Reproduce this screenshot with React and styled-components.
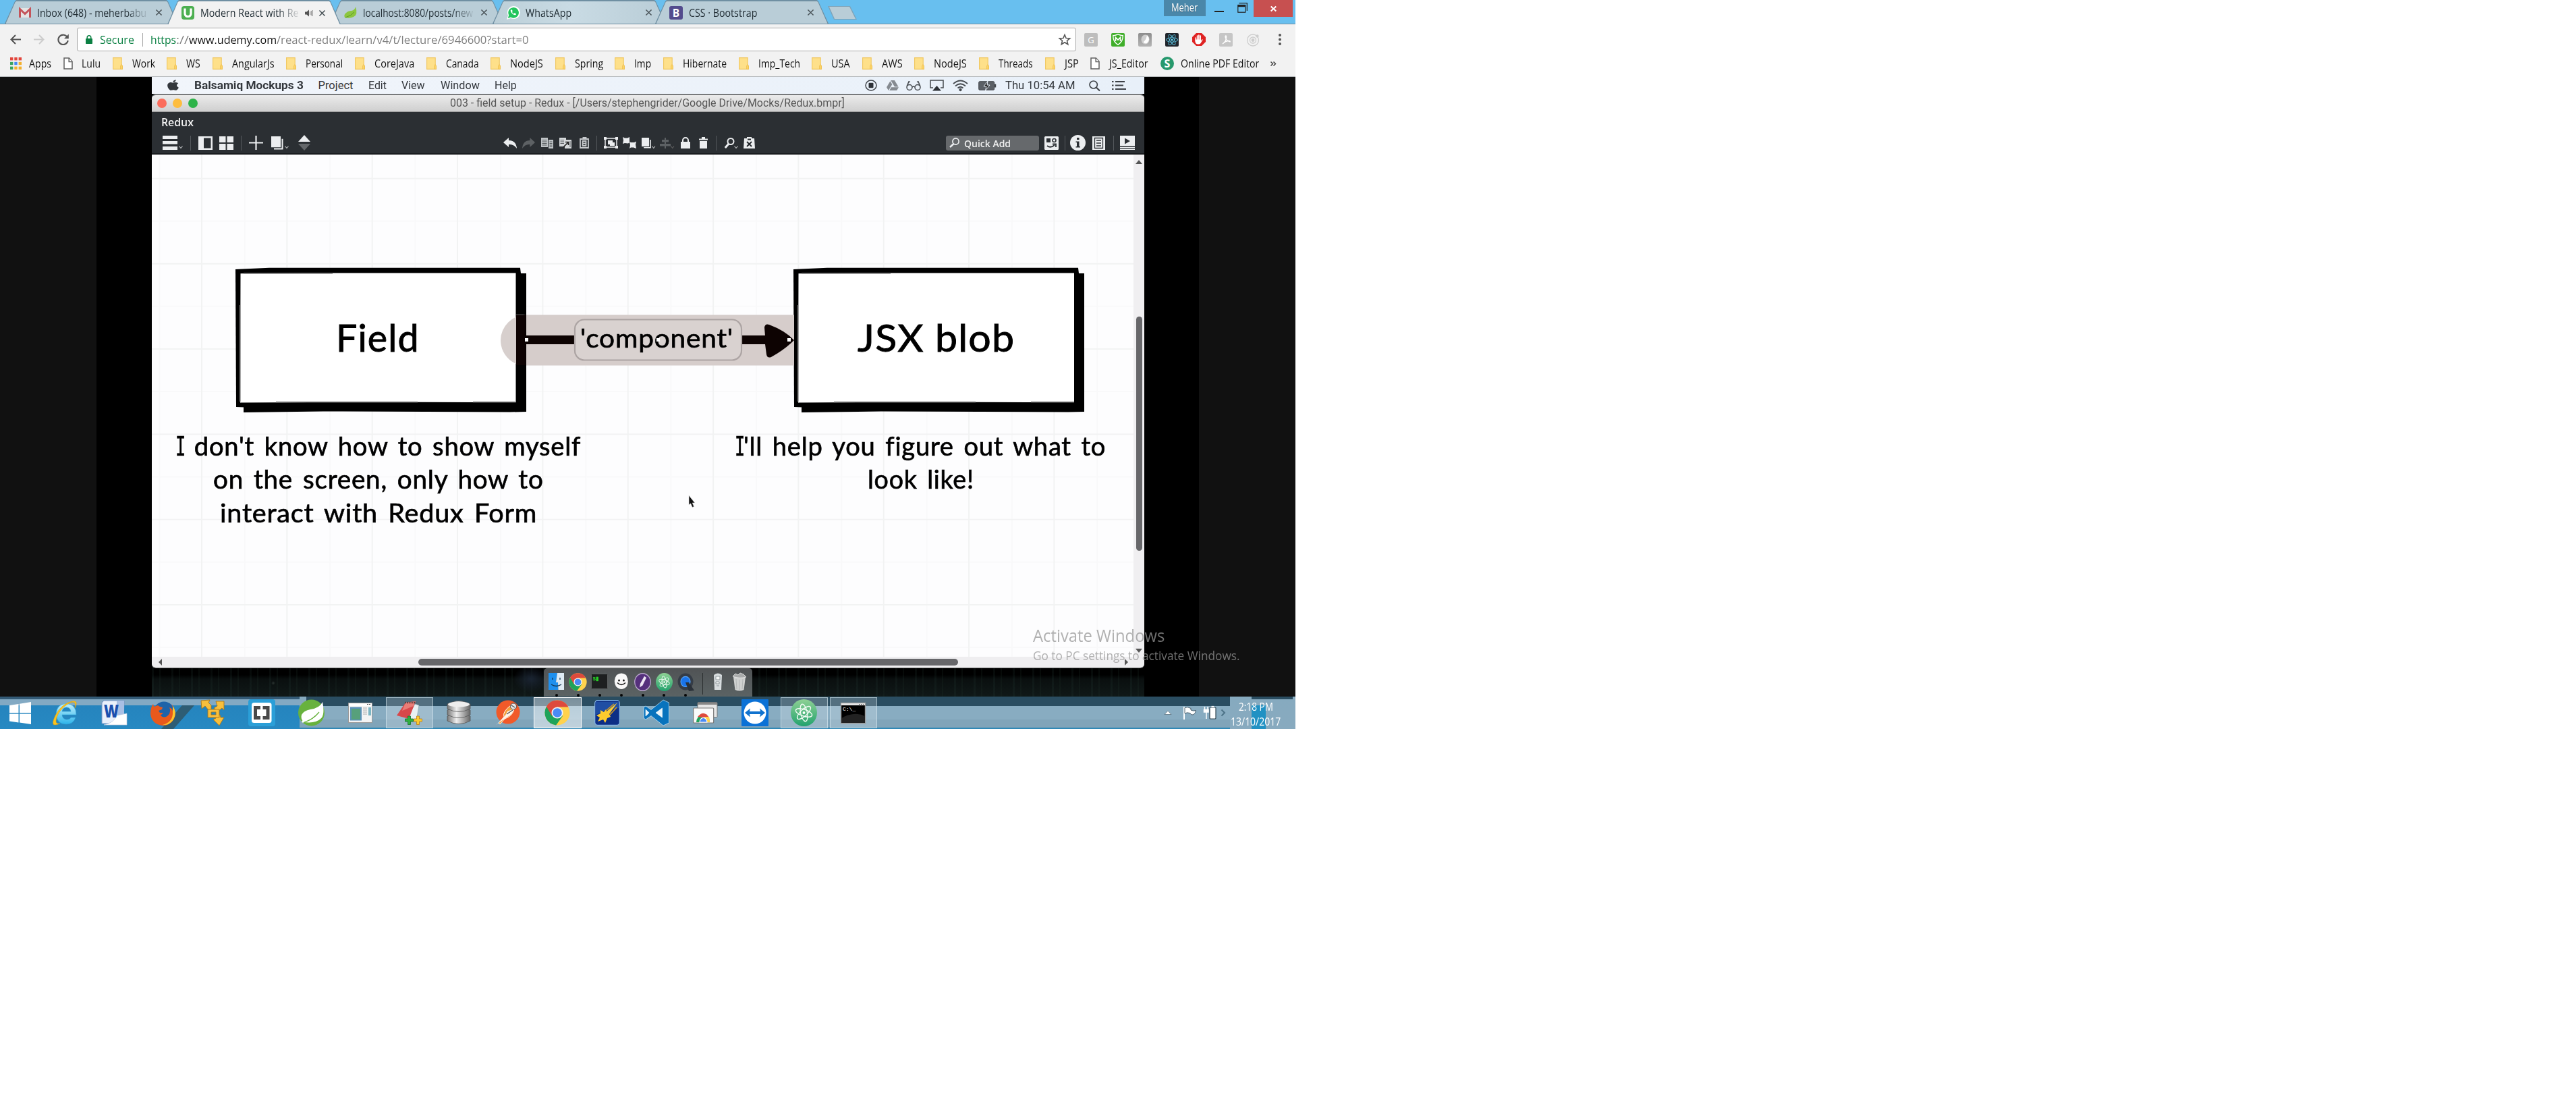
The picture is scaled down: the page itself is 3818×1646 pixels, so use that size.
import React, { useLayoutEffect, useRef, useState } from "react";
import styled, { createGlobalStyle, css } from "styled-components";
import { FaApple, FaReact, FaGoogleDrive } from "react-icons/fa";

const SEGOE = `"Open Sans", "Noto Sans", sans-serif`;
const MAC = `Roboto, Inter, sans-serif`;
const SKETCH = `Lato, "Open Sans", sans-serif`;

const GlobalStyle = createGlobalStyle`
  * { box-sizing: border-box; }
  body { margin: 0; background: #fff; overflow: hidden; }
  svg { display: block; flex: none; }
`;

/* ---------- text that is squeezed or stretched to a given width ---------- */

const FitBox = styled.span`
  display: block;
  flex: none;
  width: ${(p) => p.$w}px;
  margin-left: ${(p) => p.$gap || 0}px;
  line-height: inherit;
  white-space: pre;
  color: ${(p) => p.$color || "inherit"};
`;
const FitInner = styled.span`
  display: inline-block;
  transform-origin: 0 50%;
`;

function Fit({ w, gap, color, children }) {
  const ref = useRef(null);
  const [k, setK] = useState(1);
  useLayoutEffect(() => {
    if (ref.current) setK(w / ref.current.offsetWidth);
  }, [w]);
  return (
    <FitBox $w={w} $gap={gap} $color={color}>
      <FitInner ref={ref} style={{ transform: `scaleX(${k})` }}>
        {children}
      </FitInner>
    </FitBox>
  );
}

/* ---------- generic drawing ---------- */

const Glyph = styled.svg.attrs({ preserveAspectRatio: "none" })`
  width: ${(p) => p.$w}px;
  height: ${(p) => p.$h}px;
  margin-left: ${(p) => p.$gap || 0}px;
  margin-top: ${(p) => p.$top || 0}px;
  overflow: visible;
`;

const Desktop = styled.div`
  display: flex;
  flex-direction: column;
  width: 1920px;
  height: 1080px;
  position: relative;
  overflow: hidden;
  font-family: ${SEGOE};
  background: #111;
`;

/* ---------- tab strip ---------- */

const TabStrip = styled.div`
  display: flex;
  align-items: flex-start;
  height: 36px;
  padding-left: 7px;
  background: #68bfef;
  border-bottom: 1px solid #6f8fa2;
  flex: none;
`;
const Tab = styled.div`
  position: relative;
  z-index: ${(p) => (p.$active ? 3 : 1)};
  display: flex;
  align-items: center;
  width: 257px;
  height: ${(p) => (p.$active ? 36 : 35)}px;
  padding: 2px 0 0 21px;
  margin-right: -16px;
  flex: none;
  font-size: 15.5px;
  line-height: 20px;
  color: #222e35;
  &::before,
  &::after {
    content: "";
    position: absolute;
    z-index: -1;
    inset: 0;
    background: #6f8fa2;
    clip-path: polygon(0 100%, 15px 2px, 17px 0, 240px 0, 242px 2px, 257px 100%);
  }
  &::after {
    inset: 1.5px 1.5px 0 1.5px;
    background: ${(p) => (p.$active ? "#f2f2f2" : p.$glow ? "linear-gradient(90deg,#bccfd8,#c9dbe4 45%,#b9cdd7)" : "#b9cdd7")};
    clip-path: polygon(0 100%, 14px 2px, 16px 0, 238px 0, 240px 2px, 254px 100%);
  }
`;
const TabTitle = styled.div`
  width: ${(p) => p.$w}px;
  margin-left: 9px;
  flex: none;
  ${(p) => p.$fade && css`mask-image: linear-gradient(90deg, #000 calc(100% - 30px), rgba(0, 0, 0, 0.12));`}
`;
const NewTab = styled.div`
  width: 43px;
  height: 20px;
  margin: 9px 0 0 15px;
  background: #7ea3b8;
  clip-path: polygon(0 0, 33px 0, 43px 100%, 9px 100%);
  display: flex;
  padding: 1px;
  &::after {
    content: "";
    flex: 1;
    background: #b9cdd7;
    clip-path: polygon(1px 0, 31px 0, 40px 100%, 9px 100%);
  }
`;
const TabClose = ({ gap }) => (
  <Glyph $w={9} $h={9} $gap={gap} viewBox="0 0 10 10" stroke="#4a5459" strokeWidth="1.7">
    <path d="M0.5 0.5 9.5 9.5M9.5 0.5 0.5 9.5" />
  </Glyph>
);
const WindowControls = styled.div`
  display: flex;
  align-items: flex-start;
  margin-left: auto;
  padding-right: 4px;
`;
const UserBadge = styled.div`
  width: 62px;
  height: 24px;
  padding-left: 11px;
  background: #4a87a9;
  color: #fff;
  font-size: 15.5px;
  font-weight: 500;
  line-height: 22px;
  text-shadow: 0 1px 1px #2c5670;
`;
const CloseButton = styled.div`
  display: flex;
  align-items: center;
  justify-content: center;
  width: 58px;
  height: 25px;
  margin-left: 9px;
  background: #c75050;
`;

/* ---------- address row ---------- */

const AddressRow = styled.div`
  display: flex;
  align-items: center;
  height: 40px;
  padding-left: 15px;
  padding-top: 5px;
  background: #f2f2f2;
  flex: none;
`;
const Omnibox = styled.div`
  display: flex;
  align-items: center;
  width: 1481px;
  height: 35px;
  margin-left: 12px;
  padding: 0 7px 0 12px;
  border: 1px solid #a9a9a9;
  border-radius: 3px;
  background: #fff;
  font-size: 17px;
  line-height: 24px;
  color: #808080;
`;
const Divider = styled.i`
  width: 1px;
  height: 20px;
  margin: 0 11px 0 12px;
  background: #a5a5a5;
`;
const Extensions = styled.div`
  display: flex;
  align-items: center;
  gap: 20px;
  margin-left: 12px;
`;
const ExtTile = styled.div`
  display: flex;
  align-items: center;
  justify-content: center;
  width: 20px;
  height: 20px;
  border-radius: 2px;
  background: ${(p) => p.$bg};
  color: ${(p) => p.$color || "#fff"};
  font: 13px/20px ${SEGOE};
`;

/* ---------- bookmarks ---------- */

const Bookmarks = styled.div`
  display: flex;
  align-items: center;
  gap: 17.6px;
  height: 38px;
  padding: 0 0 1px 15px;
  background: #f2f2f2;
  border-bottom: 1px solid #b4b7ba;
  color: #111;
  font-size: 15.5px;
  line-height: 22px;
  flex: none;
`;
const Bookmark = styled.div`
  display: flex;
  align-items: center;
  gap: ${(p) => p.$gap || 14}px;
`;

const FolderIcon = () => (
  <Glyph $w={15} $h={18} viewBox="0 0 15 18">
    <path d="M.6.6h12.6v10.2l1.2 2v4.6H.6z" fill="#fee08a" stroke="#f0c65f" strokeWidth="1.1" />
    <path d="M11.6 17.2v-4.6l1.4-2 1.4 2v4.8z" fill="#fdd66c" stroke="#eebd4b" strokeWidth=".8" />
  </Glyph>
);
const FileIcon = () => (
  <Glyph $w={14} $h={18} viewBox="0 0 14 18" fill="#fff" stroke="#5f5f5f" strokeWidth="1.5">
    <path d="M1 1h7.4L13 6v11H1z" />
    <path d="M8.2 1v5.4H13" />
  </Glyph>
);
const AppsIcon = () => (
  <Glyph $w={17} $h={18} viewBox="0 0 17 18">
    {["#e2453c", "#e2453c", "#e2453c", "#3aa35f", "#4688f1", "#f3b02c", "#3aa35f", "#f3b02c", "#f3b02c"].map((c, i) => (
      <rect key={i} x={(i % 3) * 6.3} y={Math.floor(i / 3) * 6.8} width="4.4" height="4.4" fill={c} />
    ))}
  </Glyph>
);
const PdfIcon = () => (
  <Glyph $w={20} $h={20} viewBox="0 0 20 20">
    <circle cx="10" cy="10" r="10" fill="#27996d" />
    <text x="10" y="15.6" textAnchor="middle" fontSize="16" fontWeight="700" fill="#fff" fontFamily="Open Sans">S</text>
  </Glyph>
);

const folders = [
  ["Work", 34], ["WS", 21], ["AngularJs", 63], ["Personal", 55], ["CoreJava", 59], ["Canada", 49],
  ["NodeJS", 49], ["Spring", 42], ["Imp", 25], ["Hibernate", 65], ["Imp_Tech", 62], ["USA", 28],
  ["AWS", 31], ["NodeJS", 49], ["Threads", 51], ["JSP", 21],
];

/* ---------- lecture video ---------- */

const PlayerArea = styled.div`
  display: flex;
  justify-content: center;
  height: 918px;
  flex: none;
  padding: 0 143px;
  background: #111;
`;
const Letterbox = styled.div`
  display: flex;
  width: 1634px;
  padding: 0 81px 0 82px;
  background: #000;
`;
const MacScreen = styled.div`
  display: flex;
  flex-direction: column;
  width: 1471px;
  font-family: ${MAC};
  background:
    radial-gradient(3px 3px at 180px 898px, #2b3432, transparent),
    radial-gradient(26px 20px at 562px 892px, #1a2432, transparent),
    repeating-linear-gradient(90deg, rgba(40, 66, 60, 0.16) 0 3px, transparent 3px 11px, rgba(30, 48, 40, 0.22) 11px 13px, transparent 13px 29px),
    linear-gradient(#000 886px, #0a0f0f 892px, #101918);
`;
const MenuBar = styled.div`
  display: flex;
  align-items: center;
  height: 25px;
  padding-right: 27px;
  background: linear-gradient(90deg, #f1f5fb, #e8f0f9);
  color: #33373c;
  font-size: 16.5px;
  line-height: 24px;
  flex: none;
`;
const Bold = styled.b`
  font-weight: 700;
`;
const Push = styled.div`
  flex: 1;
`;
const MacWindow = styled.div`
  display: flex;
  flex-direction: column;
  height: 851px;
  border-radius: 6px;
  overflow: hidden;
  border-top: 2px solid #77797b;
  border-bottom: 1px solid #888;
  background: #2b2f33;
  flex: none;
`;
const TitleBar = styled.div`
  display: flex;
  align-items: center;
  height: 25px;
  padding-left: 8px;
  background: linear-gradient(#ebebeb, #cfcfcf);
  border-bottom: 1px solid #999;
  color: #555;
  font-size: 16px;
  line-height: 24px;
  flex: none;
`;
const Light = styled.i`
  width: 14px;
  height: 14px;
  margin: 0 9px 0 0;
  border-radius: 50%;
  background: ${(p) => p.$c};
`;
const ProjectName = styled.div`
  display: flex;
  height: 28px;
  padding: 1px 0 0 14px;
  color: #f2f2f2;
  font: 600 16.5px/27px ${SEGOE};
  flex: none;
`;
const ToolRow = styled.div`
  display: flex;
  align-items: center;
  height: 35px;
  padding: 2px 14px 0 0;
  border-bottom: 2px solid #191b1e;
  flex: none;
`;
const Sep = styled.i`
  width: 1px;
  height: 22px;
  margin-left: ${(p) => p.$gap}px;
  background: #54585c;
`;
const QuickAdd = styled.div`
  display: flex;
  align-items: center;
  width: 138px;
  height: 22px;
  padding-left: 5px;
  border-radius: 3px;
  background: #66696c;
  color: #f1f1f1;
  font: 600 15px/22px ${SEGOE};
`;
const Chevron = ({ gap, dim, w = 6 }) => (
  <Glyph $w={w} $h={4} $gap={gap} $top={13} viewBox="0 0 6 4" fill="none" stroke={dim ? "#666" : "#c8cacc"} strokeWidth="1.1">
    <path d="M.5.5 3 3.5 5.5.5" />
  </Glyph>
);

/* ---------- mockup canvas ---------- */

const Workspace = styled.div`
  display: flex;
  flex: 1;
  min-height: 0;
`;
const Canvas = styled.div`
  position: relative;
  width: 1455px;
  font-family: ${SKETCH};
  color: #000;
  background-color: #fdfdfe;
  background-image:
    linear-gradient(90deg, #f2f3f3 2px, transparent 2px),
    linear-gradient(#f2f3f3 2px, transparent 2px),
    linear-gradient(90deg, #f9f9fa 2px, transparent 2px),
    linear-gradient(#f9f9fa 2px, transparent 2px);
  background-size: 126.35px 100%, 100% 126.3px, 126.35px 100%, 100% 126.3px;
  background-position: 73px 0, 0 34.5px, 10.5px 0, 0 97.5px;
`;
const VScroll = styled.div`
  display: flex;
  flex-direction: column;
  align-items: center;
  width: 16px;
  padding: 8px 0 6px;
  background: #f0eff1;
`;
const VThumb = styled.i`
  width: 9px;
  height: 347px;
  margin-top: 226px;
  border-radius: 5px;
  background: #67676a;
`;
const HScroll = styled.div`
  display: flex;
  align-items: center;
  height: 16px;
  padding: 0 24px 0 10px;
  background: #efeef0;
  flex: none;
`;
const HThumb = styled.i`
  width: 800px;
  height: 10px;
  margin-left: 380px;
  border-radius: 5px;
  background: #67676a;
`;
const Arrow = styled.i`
  border: 5px solid transparent;
  ${(p) => p.$dir === "up" && "border-bottom: 6px solid #555; border-top: 0;"}
  ${(p) => p.$dir === "down" && "border-top: 6px solid #555; border-bottom: 0; margin-top: auto;"}
  ${(p) => p.$dir === "left" && "border-right: 5px solid #555; border-left: 0;"}
  ${(p) => p.$dir === "right" && "border-left: 5px solid #555; border-right: 0; margin-left: auto;"}
`;
const Diagram = styled.svg`
  position: absolute;
  inset: 0;
`;
const Label = styled.div`
  position: absolute;
  left: ${(p) => p.$x}px;
  top: ${(p) => p.$y}px;
  font-size: ${(p) => p.$size}px;
  line-height: ${(p) => p.$lh || p.$size}px;
  letter-spacing: 0.02em;
  -webkit-text-stroke: ${(p) => p.$stroke || 0.7}px #000;
  white-space: nowrap;
`;
const Note = styled(Label)`
  display: flex;
  flex-direction: column;
  align-items: center;
  word-spacing: 0.11em;
`;
const Slab = styled.span`
  display: inline-block;
  margin: 0 -0.16em 0 -0.14em;
  font-family: "DejaVu Sans Mono", monospace;
  font-size: 0.98em;
  line-height: 1;
  transform: scaleX(0.68);
`;

/* a hand-drawn box with a heavy offset shadow; x, y is the outer corner */
const Box = ({ x, y, w, right }) => (
  <g transform={`translate(${x} ${y})`}>
    <path d={`M12 8H${w + 9}V213L${w - 15} 213.5 130 212.5 12 214z`} />
    <path d={`M0 2 50 -.3H${w}L${w + 1} 8V206L30 207 1 206z`} />
    <path d={`M7.500 8.300 100 7.500H${w - right}V199L${w - 60} 199 200 198.500 7 199.500z`} fill="#fff" />
    <path d="M7 55V198" stroke="#9a9a9a" strokeWidth="1.6" />
    <path d={`M60 198.400H270M${w - 70} 198.400H${w - right}`} stroke="#aaa" strokeWidth="1.6" />
    <path d="M12 8H144" stroke="#777" strokeWidth="1.4" />
  </g>
);

function MockCanvas() {
  return (
    <Canvas>
      <Diagram width="1455" height="744">
        <Box x={124} y={168} w={422} right={6.5} />
        <Box x={951} y={168} w={422} right={6} />
        <path d="M555 237.5a38 38 0 0 0-38 37.5 38 38 0 0 0 23 35V237.5z" fill="#d4cbc9" opacity=".92" />
        <path d="M555 237.5H952V312.5H555z" fill="#d6cdcb" />
        <path d="M555 268H627V281H555zM874 268H918V281H874z" fill="#0d0302" />
        <path d="M908 256q1-6 7-4 24 9 37 23-14 14-34 25-6 2-7-4l-2-15q-1-6 0-12z" fill="#0d0302" />
        <rect x="627" y="244.5" width="247" height="60" rx="14" fill="#d9d2d0" stroke="#aca4a3" strokeWidth="2.2" />
        <rect x="540" y="238" width="14.5" height="74" fill="#0d0202" />
        <rect x="553" y="272" width="5" height="5" fill="#fff" />
        <rect x="942" y="272" width="5" height="5" fill="#fff" />
      </Diagram>
      <Label $x={273} $y={243} $size={55.5} $stroke={0.9}><Fit w={124}>Field</Fit></Label>
      <Label $x={1046} $y={243} $size={55.5} $stroke={0.9}><Fit w={233}>JSX blob</Fit></Label>
      <Label $x={635} $y={252} $size={39}><Fit w={227}>'component'</Fit></Label>
      <Note $x={36} $y={405.5} $size={39.5} $lh={49.7}>
        <Fit w={600}><Slab>I</Slab> don't know how to show myself</Fit>
        <Fit w={490}>on the screen, only how to</Fit>
        <Fit w={470}>interact with Redux Form</Fit>
      </Note>
      <Note $x={865} $y={405.5} $size={39.5} $lh={49.7}>
        <Fit w={549}><Slab>I</Slab>'ll help you figure out what to</Fit>
        <Fit w={158}>look like!</Fit>
      </Note>
      <Diagram width="1455" height="744">
        <rect x="748" y="272" width="5" height="5" fill="#fff" />
        <path d="M796 505v14l2.600-2 2.600 5.500 2.400-1-2.400-5.500h3.600z" fill="#111" stroke="#ddd" strokeWidth=".6" />
      </Diagram>
    </Canvas>
  );
}

/* ---------- mac dock ---------- */

const DockTray = styled.div`
  display: flex;
  justify-content: center;
  flex: 1;
`;
const Dock = styled.div`
  display: flex;
  align-items: flex-start;
  width: 309px;
  padding: 6.500px 0 0 6px;
  margin-left: -1px;
  border-radius: 5px 5px 0 0;
  background: linear-gradient(#505355, #5b6364);
`;
const DockItem = styled.div`
  display: flex;
  flex-direction: column;
  align-items: center;
  justify-content: space-between;
  width: 27px;
  height: 35px;
  margin-right: 5.300px;
  &::after {
    content: "";
    width: 4px;
    height: 4px;
    border-radius: 50%;
    background: ${(p) => (p.$idle ? "transparent" : "#050505")};
  }
`;
const DockSep = styled.i`
  width: 1px;
  height: 32px;
  margin: 0 9px 0 6px;
  background: #2c3031;
`;

const Chrome = ({ w, h }) => (
  <Glyph $w={w} $h={h} viewBox="0 0 40 40">
    <circle cx="20" cy="20" r="19.500" fill="#ffd24d" />
    <path d="M20 20 3.100 10.200A19.500 19.500 0 0 0 18 39.400L28.400 25z" fill="#1fa35a" />
    <path d="M3.100 10.200A19.500 19.500 0 0 1 37.300 11H20L11.500 24.800z" fill="#de4a3c" />
    <circle cx="20" cy="20" r="9" fill="#f4f4f4" />
    <circle cx="20" cy="20" r="7.200" fill="#4a8af4" />
  </Glyph>
);
const AtomMark = ({ w, h }) => (
  <Glyph $w={w} $h={h} viewBox="0 0 40 40">
    <defs>
      <linearGradient id="atomFill" x1="0" y1="0" x2="0" y2="1">
        <stop offset="0" stopColor="#8ed194" />
        <stop offset="1" stopColor="#23a26e" />
      </linearGradient>
    </defs>
    <circle cx="20" cy="20" r="20" fill="url(#atomFill)" />
    <g fill="none" stroke="#f2fbf4" strokeWidth="1.400">
      <ellipse cx="20" cy="20" rx="5" ry="13" transform="rotate(-12 20 20)" />
      <ellipse cx="20" cy="20" rx="5" ry="13" transform="rotate(48 20 20)" />
      <ellipse cx="20" cy="20" rx="5" ry="13" transform="rotate(108 20 20)" />
    </g>
    <circle cx="20" cy="20" r="2" fill="#fff" />
  </Glyph>
);

function MacDock() {
  return (
    <DockTray>
      <Dock>
        <DockItem>
          <Glyph $w={25} $h={25} viewBox="0 0 25 25">
            <path d="M1 0H14L12 14H15L15.500 25H1z" fill="#1f90ee" />
            <path d="M14 0H24V25H15.500L15 14H12z" fill="#dfeaf3" />
            <path d="M7 7v3M18 7v3M5 17q7.500 5 15 0" stroke="#14344f" fill="none" strokeWidth="1.300" />
          </Glyph>
        </DockItem>
        <DockItem><Chrome w={27} h={27} /></DockItem>
        <DockItem>
          <Glyph $w={25} $h={25} viewBox="0 0 25 25">
            <rect x=".5" y="1.500" width="24" height="22" rx="1" fill="#1d1f20" stroke="#5c5f60" />
            <text x="2.500" y="11" fontSize="7.500" fontWeight="700" fontFamily="Liberation Mono" fill="#26d326">$▮</text>
          </Glyph>
        </DockItem>
        <DockItem>
          <Glyph $w={22} $h={25} viewBox="0 0 22 25">
            <path d="M4 3q7-5 14 0 5 9 1 17-8 8-16 0-5-9 1-17z" fill="#f8f8f8" />
            <ellipse cx="7.500" cy="11" rx="1.300" ry="1.500" /><ellipse cx="14.500" cy="11" rx="1.300" ry="1.500" />
            <path d="M5 14.500q6 6 12 0" fill="none" stroke="#111" strokeWidth="1.500" />
          </Glyph>
        </DockItem>
        <DockItem>
          <Glyph $w={25} $h={27} viewBox="0 0 25 25">
            <circle cx="12.500" cy="12.500" r="11.800" fill="#55307c" stroke="#b9a6cc" strokeWidth="1.300" />
            <path d="M15 4.500 18 6.500 12.500 17 8 20 9 14.500z" fill="#eee7f4" />
          </Glyph>
        </DockItem>
        <DockItem><AtomMark w={25} h={27} /></DockItem>
        <DockItem>
          <Glyph $w={25} $h={27} viewBox="0 0 25 25">
            <circle cx="12" cy="12" r="11.500" fill="#353c46" />
            <circle cx="12" cy="12" r="7" fill="#1a74ea" stroke="#59a9ff" strokeWidth="1" />
            <path d="M12 13 17 13 25 24 17 25z" fill="#2a3038" />
          </Glyph>
        </DockItem>
        <DockSep />
        <DockItem $idle>
          <Glyph $w={14} $h={26} viewBox="0 0 14 26">
            <path d="M1 3q6-5 12 0L12 25H2z" fill="#d8dddf" />
            <path d="M4 5h6v5H4zM4 13h5v3H4zM5 19h4" stroke="#8e979b" fill="#f6f8f8" />
          </Glyph>
        </DockItem>
        <DockItem $idle>
          <Glyph $w={22} $h={27} viewBox="0 0 22 27">
            <path d="M2 6H20L17.500 25Q11 28 4.500 25z" fill="#cfd1d0" />
            <path d="M1 5 5 1 9 3 12 0 17 2 21 6Q11 9 1 5z" fill="#a9abab" stroke="#eee" strokeWidth=".8" />
            <path d="M6 9 7 24M11 10V25M16 9 15 24" stroke="#b5b8b7" />
          </Glyph>
        </DockItem>
      </Dock>
    </DockTray>
  );
}

/* ---------- mac toolbar ---------- */

const Stack = ({ gap, w, h }) => (
  <Glyph $gap={gap} $w={w} $h={h} viewBox="0 0 19 21">
    <path d="M0 0H14V17H0z" fill="#eceef0" />
    <path d="M16.500 4V19.500H4" fill="none" stroke="#eceef0" strokeWidth="2" />
  </Glyph>
);

function BalsamiqTools() {
  const c = "#eceef0";
  return (
    <ToolRow>
      <Glyph $gap={15.5} $w={22} $h={21} viewBox="0 0 22 21" fill={c}><path d="M0 0H22V5H0zM0 8H22V12.500H0zM0 16H22V21H0z" /></Glyph>
      <Chevron gap={2} />
      <Sep $gap={11} />
      <Glyph $gap={11} $w={21} $h={20} viewBox="0 0 21 20" fill={c}><path fillRule="evenodd" d="M0 0H21V20H0zM8 2.500V17.500H18.500V2.500z" /></Glyph>
      <Glyph $gap={10} $w={21} $h={20} viewBox="0 0 21 20" fill={c}><path d="M0 0H9.500V9H0zM11.500 0H21V9H11.500zM0 11H9.500V20H0zM11.500 11H21V20H11.500z" /></Glyph>
      <Sep $gap={11.5} />
      <Glyph $gap={10.5} $w={21} $h={21} viewBox="0 0 21 21" stroke={c} strokeWidth="2.200"><path d="M0 10.500H21M10.500 0V21" /></Glyph>
      <Stack gap={12} w={19} h={20} />
      <Chevron gap={1.5} />
      <Glyph $gap={13.5} $w={18} $h={23} viewBox="0 0 18 23"><path d="M9 0 18 10H0z" fill={c} /><path d="M9 23 18 13H0z" fill="#64676a" /></Glyph>

      <Glyph $gap={286} $w={20} $h={16} viewBox="0 0 20 16"><path d="M8 0V4Q19 4 20 16 15 9 8 10V14L0 7z" fill={c} /></Glyph>
      <Glyph $gap={8} $w={19} $h={16} viewBox="0 0 20 16"><path d="M12 0V4Q1 4 0 16 5 9 12 10V14L20 7z" fill="#5d6164" /></Glyph>
      <Glyph $gap={9} $w={18} $h={16} viewBox="0 0 18 16">
        <path d="M0 0H10V14H0zM11 3H18V16H11z" fill="#bfc3c6" />
        <path d="M1.500 3.500H8.500M1.500 6H8.500M1.500 8.500H8.500M1.500 11H8.500M12.500 6H16.500M12.500 8.500H16.500M12.500 11H16.500M12.500 13.500H16.500" stroke="#3b3f43" strokeWidth=".8" />
      </Glyph>
      <Glyph $gap={9.5} $w={18} $h={16} viewBox="0 0 18 16">
        <path d="M0 0H10V13H0zM8 3H18V16H8z" fill="#d5d8da" />
        <path d="M1.500 3.500H7M1.500 6H7M1.500 8.500H7M16 5V14" stroke="#3b3f43" strokeWidth=".8" />
        <path d="M6 14 13 7M9 6.500H13.500V11" stroke="#222" fill="none" strokeWidth="1.600" />
      </Glyph>
      <Glyph $gap={11.5} $w={14} $h={17} viewBox="0 0 14 17" fill="none" stroke="#c6c9cc" strokeWidth="1.800">
        <path d="M1 3H13V16H1zM4.500 1H9.500V3M4.500 6H9.500V13H4.500zM4.500 9.500H9" />
      </Glyph>
      <Sep $gap={11.5} />
      <Glyph $gap={10} $w={21} $h={17} viewBox="0 0 21 17">
        <path d="M2 2H19V15H2z" fill="none" stroke={c} strokeWidth="1.500" />
        <path d="M0 0H4V4H0zM17 0H21V4H17zM0 13H4V17H0zM17 13H21V17H17zM6 5H13V11H6zM11 8H16V13H9V11H11z" fill={c} />
      </Glyph>
      <Glyph $gap={7} $w={20} $h={17} viewBox="0 0 20 17" fill={c}>
        <path d="M0 0 3 1.500H7L10 0V8L8 9.500 3 9 0 10 1 5zM10 7 12 8H17L20 6.500 19 11 20 17 16 15.500H12L10 17 11 12z" />
      </Glyph>
      <Stack gap={7.5} w={15} h={16} />
      <Chevron gap={0} w={5.5} />
      <Glyph $gap={7} $w={16} $h={16} viewBox="0 0 16 16" fill="#5d6164"><path d="M7 0H9V16H7zM3 3H13V6.500H3zM0 9H16V12.500H0z" /></Glyph>
      <Chevron gap={0} w={5.5} dim />
      <Glyph $gap={9} $w={14} $h={17} viewBox="0 0 14 17"><path d="M0 7H14V17H0z" fill={c} /><path d="M3 8V5a4 4 0 0 1 8 0V8" fill="none" stroke={c} strokeWidth="2" /></Glyph>
      <Glyph $gap={13.5} $w={13} $h={17} viewBox="0 0 13 17" fill={c}><path d="M0 2.500H4V0H9V2.500H13V4.500H0zM1 6H12V17H1z" /></Glyph>
      <Sep $gap={12} />
      <Glyph $gap={12} $w={15} $h={16} viewBox="0 0 15 16" fill="none" stroke={c} strokeWidth="2"><circle cx="9" cy="5.500" r="4.500" /><path d="M6 9 .8 15" strokeWidth="3" /></Glyph>
      <Chevron gap={-1} />
      <Glyph $gap={8} $w={17} $h={17} viewBox="0 0 17 17"><path d="M1 2H5V0H12V2H16L17 17H0z" fill={c} /><path d="M6 3.500H11M5 7 12 14M12 7 5 14" stroke="#22262a" strokeWidth="1.900" /></Glyph>

      <Push />
      <QuickAdd>
        <Glyph $w={15} $h={15} viewBox="0 0 15 15" fill="none" stroke={c} strokeWidth="1.700"><circle cx="9.500" cy="5.500" r="4.600" /><path d="M6.500 9 1 14" strokeWidth="2.500" /></Glyph>
        <Fit w={69} gap={7.5}>Quick Add</Fit>
      </QuickAdd>
      <Glyph $gap={8.5} $w={21} $h={20} viewBox="0 0 21 20">
        <rect width="21" height="20" rx="1.500" fill={c} />
        <path d="M3 3H9V9H3z" fill="#2b2f33" /><circle cx="14.500" cy="6" r="2.500" fill="none" stroke="#2b2f33" strokeWidth="1.600" />
        <path d="M4 14Q9 18 15 13M12 11.500H17V16" fill="none" stroke="#2b2f33" strokeWidth="1.800" />
      </Glyph>
      <Sep $gap={9} />
      <Glyph $gap={7} $w={23} $h={23} viewBox="0 0 23 23"><circle cx="11.500" cy="11.500" r="11.500" fill={c} /><path d="M10 4H13.500V7H10zM8.500 9.500H13.500V17H15V18.500H8.500V17H10V11H8.500z" fill="#2b2f33" /></Glyph>
      <Glyph $gap={10} $w={19} $h={20} viewBox="0 0 19 20"><rect width="19" height="20" fill={c} /><path d="M3.500 2.500H15.500V17.500H3.500zM6 6H13M6 10H13M6 14H13" fill="none" stroke="#2b2f33" strokeWidth="1.300" /></Glyph>
      <Sep $gap={12} />
      <Glyph $gap={9} $w={22} $h={21} viewBox="0 0 22 21"><path d="M0 0H22V15.500H0zM0 17H22V18.200H0zM0 19.500H22V21H0z" fill={c} /><path d="M7 3.500 15 8 7 12.500z" fill="#2b2f33" /></Glyph>
    </ToolRow>
  );
}

function MacMenu() {
  return (
    <MenuBar>
      <Glyph as={FaApple} $gap={23} $w={17} $h={18} $top={-2} color="#33373c" />
      <Fit w={162} gap={22.5}><Bold>Balsamiq Mockups 3</Bold></Fit>
      <Fit w={52} gap={22}>Project</Fit>
      <Fit w={27} gap={22}>Edit</Fit>
      <Fit w={35} gap={22.5}>View</Fit>
      <Fit w={58} gap={22.5}>Window</Fit>
      <Fit w={33} gap={22}>Help</Fit>
      <Push />
      <Glyph $w={18} $h={17} viewBox="0 0 18 18"><circle cx="9" cy="9" r="8" fill="none" stroke="#3d4146" strokeWidth="1.500" /><rect x="5.500" y="5" width="7" height="8" rx="1" fill="#2d3136" /></Glyph>
      <Glyph as={FaGoogleDrive} $gap={14} $w={18} $h={17} color="#858a90" />
      <Glyph $gap={11.5} $w={22} $h={14} viewBox="0 0 22 14" fill="none" stroke="#45494e" strokeWidth="1.500"><circle cx="5" cy="9.500" r="4" /><circle cx="17" cy="9.500" r="4" /><path d="M9 9Q11 7 13 9M1 8 4 1 6 1.500M21 8 18 1 16 1.500" /></Glyph>
      <Glyph $gap={13} $w={21} $h={17} viewBox="0 0 21 17"><path d="M5 12H1V1H20V12H16" fill="none" stroke="#45494e" strokeWidth="1.500" /><path d="M10.500 9 17 16.500H4z" fill="#2d3136" /></Glyph>
      <Glyph $gap={13} $w={23} $h={16} viewBox="0 0 23 16" fill="none" stroke="#45494e" strokeWidth="1.700"><path d="M1 5Q11.500-4 22 5M4 8.500Q11.500 2 19 8.500M7.500 11.500Q11.500 8 15.500 11.500" /><circle cx="11.500" cy="14" r="1.300" fill="#45494e" /></Glyph>
      <Glyph $gap={15} $w={27} $h={14} viewBox="0 0 27 14"><rect x=".7" y=".7" width="23" height="12.600" rx="1.500" fill="#5b6066" stroke="#45494e" /><path d="M25 4.500V9.500" stroke="#45494e" strokeWidth="2.500" /><path d="M14 0 8 8H12L10.500 14 17 6H13z" fill="#222" stroke="#e8f0f9" /></Glyph>
      <Fit w={103} gap={13}>Thu 10:54 AM</Fit>
      <Glyph $gap={20.5} $w={16.5} $h={16} viewBox="0 0 16 16" fill="none" stroke="#3d4146" strokeWidth="1.600"><circle cx="6.500" cy="6.500" r="5.500" /><path d="M10.500 10.500 15.500 15.500" strokeWidth="2" /></Glyph>
      <Glyph $gap={18} $w={21} $h={13} viewBox="0 0 21 13" stroke="#3d4146" strokeWidth="2"><path d="M0 1H2.500M5 1H19M0 6.500H2.500M5 6.500H17M0 12H2.500M5 12H21" /></Glyph>
    </MenuBar>
  );
}

/* ---------- windows taskbar ---------- */

const TaskBar = styled.div`
  position: relative;
  display: flex;
  align-items: center;
  height: 48px;
  flex: none;
  background:
    linear-gradient(#2a4d61 4px, transparent 4px) 1855px 0 / 61px 48px no-repeat,
    linear-gradient(transparent 13px, #2191c3 13px) 1855px 0 / 21px 48px no-repeat,
    linear-gradient(#86aabf, #88aabf) 1823px 0 / 97px 100% no-repeat,
    linear-gradient(#335a76 4px, #82a9c3 4px 13px, #2584be 13px, #2789c2) 0 0 / 444px 100% no-repeat,
    linear-gradient(#86aabf, #86aabf) 444px 0 / 10px 14px no-repeat,
    linear-gradient(#2a4d61 14px, #88acc1 14px 34px, #80a4b9 34px 46px, #3088b5 46px);
`;
const Streak = styled.i`
  position: absolute;
  left: 239px;
  top: 13px;
  width: 49px;
  height: 35px;
  background: #2e5d74;
  clip-path: polygon(63% 0, 100% 0, 37% 100%, 0 100%);
`;
const TaskCell = styled.div`
  position: relative;
  display: flex;
  align-items: center;
  justify-content: center;
  width: ${(p) => p.$w || 73.05}px;
  height: 46px;
  flex: none;
  &::before {
    content: ${(p) => (p.$state ? '""' : "none")};
    position: absolute;
    z-index: 0;
    inset: 0 1.500px;
    border: 1px solid ${(p) => (p.$state === "active" ? "#fff" : "rgba(220,236,245,.6)")};
    background: ${(p) => (p.$state === "active" ? "linear-gradient(rgba(255,255,255,.38), rgba(255,255,255,.5))" : "rgba(255,255,255,.2)")};
  }
  > svg {
    position: relative;
  }
`;
const Tray = styled.div`
  display: flex;
  align-items: center;
  margin-left: auto;
  height: 48px;
  padding-right: 22px;
`;
const Clock = styled.div`
  display: flex;
  flex-direction: column;
  align-items: center;
  width: 74px;
  margin-left: 8px;
  padding-top: 3px;
  color: #fff;
  font-size: 15.5px;
  font-weight: 500;
  line-height: 22px;
`;

function Taskbar() {
  return (
    <TaskBar>
      <Streak />
      <TaskCell $w={59.5}>
        <Glyph $w={32} $h={33} viewBox="0 0 32 33" fill="#fff"><path d="M0 5 13.500 3V16H0zM15 2.700 32 0V16H15zM0 17.500H13.500V30.500L0 28.500zM15 17.500H32V33L15 30.500z" /></Glyph>
      </TaskCell>
      <TaskCell>
        <Glyph $w={38} $h={38} viewBox="0 0 38 38">
          <defs><linearGradient id="ieFill" x1="0" y1="0" x2="0" y2="1"><stop offset="0" stopColor="#bdeffd" /><stop offset="1" stopColor="#2fb4ea" /></linearGradient></defs>
          <path fillRule="evenodd" d="M36 22H15q1 7 7 7 5 0 6-3h7q-3 10-14 10Q7 36 6 21 7 6 21 5.500 36 6 36 22zM15 17H28q-1-6-6.500-6T15 17z" fill="url(#ieFill)" stroke="#2a9dd4" strokeWidth=".6" />
          <path d="M34 12Q40 0 30 2 15 5 5 23-2 38 5 37 9 36.500 12 34.500 6 36.500 6 31 7 20 18 10 29 1 33.500 4 35.500 6 34 12z" fill="#fbc31e" stroke="#d99a0a" strokeWidth=".5" />
        </Glyph>
      </TaskCell>
      <TaskCell>
        <Glyph $w={37} $h={36} viewBox="0 0 37 36">
          <path d="M3 0H33L32 34H0V3z" fill="#e9f0fb" stroke="#7593c4" />
          <path d="M22 0H33V34H22z" fill="#a9bfe4" />
          <path d="M22 22 37 19V36H3Q18 33 22 22z" fill="#fff" stroke="#b9c6dd" strokeWidth=".7" />
          <text x="14" y="25" textAnchor="middle" fontSize="27" fontWeight="800" fontFamily="Open Sans" textLength="22" lengthAdjust="spacingAndGlyphs" fill="#1a4fae">W</text>
        </Glyph>
      </TaskCell>
      <TaskCell>
        <Glyph $w={38} $h={37} viewBox="0 0 38 37">
          <circle cx="20" cy="17" r="15.500" fill="#1d63a9" />
          <path d="M31 5Q40 16 35 27 29 37 18 37 2 35 0 20 0 10 4 5L5 9 11 7 14 9 18 10 17 13 12 15 14 18H19L15 22Q20 27 26 22 31 17 28 10 33 12 33 16 34 10 31 5z" fill="#e8591c" />
          <path d="M33 8Q40 18 34 28 28 37 18 36 32 32 33 20z" fill="#fcc52c" />
        </Glyph>
      </TaskCell>
      <TaskCell>
        <Glyph $w={35} $h={38} viewBox="0 0 35 38" fill="#f8bf3c" stroke="#a9761a" strokeWidth=".9">
          <path d="M0 1 13 0 11 4 15 8 15 14 11 15 6 9 1 13zM22 2H34V15L31 12 25 17 19 12 24 9zM18 29 22 27 22 22H28L29 26 34 26 27 38z" />
          <path fillRule="evenodd" d="M10 14H27V26H10zM15 18V22H22V18z" />
        </Glyph>
      </TaskCell>
      <TaskCell>
        <Glyph $w={40} $h={40} viewBox="0 0 40 40">
          <rect width="40" height="40" rx="4" fill="#2a9fd8" /><rect x="5" y="5" width="29.500" height="30" rx="3.500" fill="#fff" />
          <path d="M8 10H18V15H13V25H18V30H8zM31.500 10H21.500V15H26.500V25H21.500V30H31.500z" fill="#494949" />
        </Glyph>
      </TaskCell>
      <TaskCell>
        <Glyph $w={39} $h={40} viewBox="0 0 39 40">
          <circle cx="19.500" cy="20" r="19.500" fill="#68b23e" />
          <path d="M36 4Q40 24 33 29 26 36 9 34 3 30 5 23 8 17 18 15 32 13 36 4z" fill="#fff" />
          <path d="M9 34Q22 30 31 19" stroke="#68b23e" fill="none" strokeWidth="1.300" /><circle cx="7" cy="33" r="1.700" fill="#fff" />
        </Glyph>
      </TaskCell>
      <TaskCell>
        <Glyph $w={36} $h={30} viewBox="0 0 36 30">
          <rect x=".5" y=".5" width="35" height="29" fill="#f4f4f4" stroke="#999" /><path d="M1 1H35V5H1z" fill="#fff" />
          <path d="M28 2.500H30M31 2.500H33" stroke="#444" />
          <rect x="3" y="6.500" width="17" height="20" fill="#5b91b8" /><rect x="5" y="9" width="13" height="16" fill="#57a07b" />
          <path d="M22 8H28M22 11H28M22 14H28M22 17H28" stroke="#aaa" /><rect x="30" y="7" width="4" height="12" fill="#7cb6c4" />
        </Glyph>
      </TaskCell>
      <TaskCell $state="open">
        <Glyph $w={38} $h={37} viewBox="0 0 38 37">
          <path d="M27 5 33 7 29 31 14 28z" fill="#e9f1f3" stroke="#8eaab3" strokeWidth=".8" />
          <path d="M13 3 28 1 18 27 0 22z" fill="#d8484a" /><path d="M13 3 28 1 25 8 8 15z" fill="#e97d77" />
          <path d="M12 3H29" stroke="#5c3d39" strokeWidth="2.500" strokeDasharray="1.800 1.500" />
          <path d="M12.500 27H16.500V23H20.500V27H24.500V31H20.500V35.500H16.500V31H12.500z" fill="#2fae3e" stroke="#11702a" strokeWidth=".8" />
          <path d="M25.500 27H29.500V23H33.500V27H37.500V31H33.500V35.500H29.500V31H25.500z" fill="#fbcb2f" stroke="#c17b0d" strokeWidth=".8" />
        </Glyph>
      </TaskCell>
      <TaskCell>
        <Glyph $w={34} $h={35} viewBox="0 0 34 35">
          <defs><linearGradient id="dbFill"><stop offset="0" stopColor="#777" /><stop offset=".4" stopColor="#eee" /><stop offset="1" stopColor="#666" /></linearGradient></defs>
          {[22, 13, 4].map((y) => (
            <path key={y} d={`M0 ${y}V${y + 7}Q17 ${y + 16} 34 ${y + 7}V${y}Q17 ${y - 9} 0 ${y}z`} fill="url(#dbFill)" stroke="#555" strokeWidth=".8" />
          ))}
          <ellipse cx="17" cy="4.500" rx="16" ry="4" fill="#ededed" />
        </Glyph>
      </TaskCell>
      <TaskCell>
        <Glyph $w={36} $h={38} viewBox="0 0 36 38">
          <circle cx="18" cy="18" r="17.500" fill="#f15a29" />
          <path d="M4 34 12 25Q9 18 22 8L27 13Q25 24 13 28L6 36z" fill="#f6a13a" stroke="#fff" strokeWidth=".9" />
          <path d="M17 17Q13 27 0 37L14 27Q25 22 27 13z" fill="#fff" opacity=".9" /><circle cx="26" cy="9.500" r="4.500" fill="#e8e8e8" stroke="#4e4e4e" />
          <path d="M23 8 28 11M16 21 25 15" stroke="#4e4e4e" strokeWidth="1.400" />
        </Glyph>
      </TaskCell>
      <TaskCell $state="active"><Chrome w={38} h={38} /></TaskCell>
      <TaskCell>
        <Glyph $w={38} $h={38} viewBox="0 0 38 38">
          <rect x=".7" y=".7" width="36.600" height="36.600" rx="4" fill="#0d2f86" stroke="#85b8e8" strokeWidth="1.200" />
          <path d="M2 3H36V12Q18 14 2 22z" fill="#2c64b9" opacity=".6" />
          <path d="M34 4 22 21 24 25 19 27 16 34 13 29 5 32 8 26 3 23 9 20 9 15 14 18 17 14 18 17z" fill="#fccb2e" />
          <path d="M29 6 17 16M33 11 23 22" stroke="#d99a1e" strokeWidth="1.500" />
        </Glyph>
      </TaskCell>
      <TaskCell>
        <Glyph $w={39} $h={38} viewBox="0 0 39 38">
          <path fillRule="evenodd" d="M30 0 38.500 4V34L30 38 12 23.500 4 29 1 27V11L4 9 12 14.500zM4 14V24L9 19zM28.500 12 19 19 28.500 26z" fill="#0873bd" stroke="#bfe0f3" strokeWidth=".8" />
          <path d="M4 14V24L9 19zM28.500 12 19 19 28.500 26z" fill="#eaf5fb" />
        </Glyph>
      </TaskCell>
      <TaskCell>
        <Glyph $w={37} $h={32} viewBox="0 0 37 32">
          <rect x="7" y=".7" width="29" height="22" rx="1" fill="#e6e6e6" stroke="#777" /><path d="M7 1H36V4H7z" fill="#888" />
          <rect x=".7" y="9" width="30" height="22" rx="1" fill="#fafafa" stroke="#777" strokeWidth="1.200" />
          <path d="M5 30a10 11 0 0 1 20 0z" fill="#1fa35a" /><path d="M7 22Q16 11 24 23H15z" fill="#de4a3c" /><path d="M17 30 25 30Q25 25 24 22H17z" fill="#ffd24d" />
          <path d="M10 30a5 6 0 0 1 11 0z" fill="#4a8af4" stroke="#fff" strokeWidth="1.200" />
        </Glyph>
      </TaskCell>
      <TaskCell>
        <Glyph $w={40} $h={40} viewBox="0 0 40 40">
          <rect width="40" height="40" rx="1" fill="#0a71d6" /><circle cx="20" cy="20" r="16.500" fill="#fff" />
          <path d="M5 20 13 13.500 12 18H28L27 13.500 35 20 27 26.500 28 22H12L13 26.500z" fill="#1072ce" />
        </Glyph>
      </TaskCell>
      <TaskCell $state="open"><AtomMark w={39} h={40} /></TaskCell>
      <TaskCell $state="open">
        <Glyph $w={37} $h={31} viewBox="0 0 37 31">
          <rect x=".5" y=".5" width="36" height="30" fill="#000" stroke="#9a9a9a" strokeWidth="1.400" /><path d="M1 1H36V4H1z" fill="#e6e6e6" />
          <path d="M27 2.500H34" stroke="#555" strokeDasharray="1.500 1.500" />
          <path d="M1 23Q20 12 36 20V30H1z" fill="#222" />
          <text x="3" y="11.500" fontSize="8" fontFamily="Liberation Mono" fill="#fff">C:\_</text>
        </Glyph>
      </TaskCell>
      <Tray>
        <Glyph $w={10} $h={6} viewBox="0 0 10 6"><path d="M5 0 10 5.500H0z" fill="#fff" stroke="#4b6270" strokeWidth=".7" /></Glyph>
        <Glyph $gap={18} $w={19} $h={19} viewBox="0 0 19 19"><path d="M1 0V19" stroke="#fff" strokeWidth="2" /><path d="M2 1.500Q6-.5 11 2.500V5Q15 7 18.500 5.500 17 12 13 12 11 12 10 9.500 5 8 2 10z" fill="#fff" stroke="#3e5563" strokeWidth=".9" /></Glyph>
        <Glyph $gap={11} $w={19} $h={20} viewBox="0 0 19 20"><rect x="9" y="2" width="9" height="17" rx="1" fill="#fff" stroke="#314753" strokeWidth="1.200" /><path d="M11.500.8H15.500" stroke="#fff" strokeWidth="1.800" /><path d="M1.500 1V5M6 1V5M.5 5.500H7V9H.5zM4 9V19" stroke="#fff" strokeWidth="1.500" fill="#fff" /></Glyph>
        <Glyph $gap={7.5} $w={6} $h={10} viewBox="0 0 6 10" fill="none" stroke="#4d7388" strokeWidth="2"><path d="M.5.5 5 5 .5 9.500" /></Glyph>
        <Clock>
          <Fit w={51}>2:18 PM</Fit>
          <Fit w={74}>13/10/2017</Fit>
        </Clock>
      </Tray>
    </TaskBar>
  );
}

/* ---------- activation watermark, over everything ---------- */

const Watermark = styled.div`
  position: absolute;
  left: 1531px;
  top: 924px;
  color: rgba(150, 150, 150, 0.75);
`;
const MarkTitle = styled.div`
  font-size: 25.500px;
  line-height: 34px;
`;
const MarkText = styled.div`
  font-size: 18px;
  line-height: 27px;
`;

const tabs = [
  {
    title: "Inbox (648) - meherbabu", w: 162, close: 14, fade: true,
    icon: (
      <Glyph $w={18} $h={14} viewBox="0 0 18 14"><rect width="18" height="14" rx="1" fill="#e4e4e4" /><path d="M1.500 14V1.500L9 8.500 16.500 1.500V14" fill="none" stroke="#c4545a" strokeWidth="3" /></Glyph>
    ),
  },
  {
    title: "Modern React with Re", w: 145, close: 9, fade: true, active: true, audio: true,
    icon: (
      <Glyph $w={19} $h={20} viewBox="0 0 19 20"><rect width="19" height="20" rx="4" fill="#4caf50" /><path d="M5 3.500V10.500Q5 15.500 9.500 15.500T14 10.500V3.500" fill="none" stroke="#fff" strokeWidth="3.200" /></Glyph>
    ),
  },
  {
    title: "localhost:8080/posts/new", w: 163, close: 12, fade: true,
    icon: (
      <Glyph $w={19} $h={18} viewBox="0 0 19 18"><path d="M17 0Q21 12 14 15 8 18 1 16-1 12 3 9 6 6 11 6 16 5 17 0z" fill="#8cc63f" /><path d="M2 16Q11 13 15 8" fill="none" stroke="#5d9a22" /></Glyph>
    ),
  },
  {
    title: "WhatsApp", w: 68, close: 110, glow: true,
    icon: (
      <Glyph $w={19} $h={20} viewBox="0 0 19 20"><path d="M0 20 2 14A9.500 9.500 0 1 1 6 18z" fill="#fff" /><path d="M1.800 18 3.200 13.500A7.800 7.800 0 1 1 6 16.500z" fill="#23c55e" /><path d="M6 5.500Q5 8 8 11 11 14 13.500 13 14 12 13.500 11L11.500 10.300 10.500 11.500Q8.500 10.500 8 8.800L8.700 7.800 8 5.500z" fill="#fff" /></Glyph>
    ),
  },
  {
    title: "CSS · Bootstrap", w: 101, close: 75,
    icon: (
      <Glyph $w={20} $h={20} viewBox="0 0 20 20"><rect width="20" height="20" rx="3" fill="#534b8d" /><text x="10" y="15.500" textAnchor="middle" fontSize="15.500" fontWeight="700" fill="#fff" fontFamily="Open Sans">B</text></Glyph>
    ),
  },
];

export default function App() {
  return (
    <Desktop>
      <GlobalStyle />
      <TabStrip>
        {tabs.map((t) => (
          <Tab key={t.title} $active={t.active} $glow={t.glow}>
            {t.icon}
            <TabTitle $w={t.w} $fade={t.fade}><Fit w={t.w}>{t.title}</Fit></TabTitle>
            {t.audio && (
              <Glyph $gap={10} $w={12} $h={11} viewBox="0 0 12 11"><path d="M0 3.500H2.500L6 .5V10.500L2.500 7.500H0z" fill="#555" /><path d="M7.500 3V8M9.300 2V9M11.200 1V10" stroke="#888" strokeWidth="1" /></Glyph>
            )}
            <TabClose gap={t.close} />
          </Tab>
        ))}
        <NewTab />
        <WindowControls>
          <UserBadge><Fit w={39}>Meher</Fit></UserBadge>
          <Glyph $gap={13} $top={16} $w={14} $h={2} viewBox="0 0 14 2"><rect width="14" height="2" fill="#222" /></Glyph>
          <Glyph $gap={20} $top={4} $w={15} $h={15} viewBox="0 0 15 15" fill="none" stroke="#222" strokeWidth="1.200"><path d="M2.500.7H14.300V12" /><rect x=".8" y="3.500" width="11" height="10.700" /><path d="M.8 5H12" strokeWidth="2.400" /></Glyph>
          <CloseButton>
            <Glyph $w={9} $h={8} viewBox="0 0 9 8" stroke="#fff" strokeWidth="2"><path d="M.7.5 8.300 7.500M8.300.5.7 7.500" /></Glyph>
          </CloseButton>
        </WindowControls>
      </TabStrip>

      <AddressRow>
        <Glyph $w={16} $h={15} viewBox="0 0 16 15" fill="none" stroke="#555" strokeWidth="2"><path d="M16 7.500H1.500M8 1 1.500 7.500 8 14" /></Glyph>
        <Glyph $gap={19} $w={16} $h={15} viewBox="0 0 16 15" fill="none" stroke="#ccc" strokeWidth="2"><path d="M0 7.500H14.500M8 1 14.500 7.500 8 14" /></Glyph>
        <Glyph $gap={19} $w={17} $h={17} viewBox="0 0 17 17" fill="none" stroke="#555" strokeWidth="2.100"><path d="M15 5.500A7.200 7.200 0 1 0 15.700 10" /><path d="M16.800.5V7.300H10z" fill="#555" stroke="none" /></Glyph>
        <Omnibox>
          <Glyph $w={10} $h={13} viewBox="0 0 10 13"><rect y="5" width="10" height="8" rx=".8" fill="#0b8043" /><path d="M2.200 6V3.500a2.800 2.800 0 0 1 5.600 0V6" fill="none" stroke="#0b8043" strokeWidth="1.500" /></Glyph>
          <Fit w={51} gap={11} color="#0b8043">Secure</Fit>
          <Divider />
          <Fit w={38} color="#0b8043">https</Fit>
          <Fit w={19}>://</Fit>
          <Fit w={130} color="#111">www.udemy.com</Fit>
          <Fit w={374}>/react-redux/learn/v4/t/lecture/6946600?start=0</Fit>
          <Push />
          <Glyph $w={18} $h={17} viewBox="0 0 18 17" fill="none" stroke="#555" strokeWidth="1.600"><path d="M9 1.500 11.100 6.500 16.700 6.900 12.500 10.400 13.800 15.700 9 12.800 4.200 15.700 5.500 10.400 1.300 6.900 6.900 6.500z" /></Glyph>
        </Omnibox>
        <Extensions>
          <ExtTile $bg="#bdbdbd">G</ExtTile>
          <ExtTile $bg="#3fae2a">
            <Glyph $w={16} $h={17} viewBox="0 0 16 17"><path d="M8 .7Q12 3 15.300 2.500 15.500 12 8 16.300.5 12 .7 2.500 4 3 8 .7z" fill="#3fae2a" stroke="#fff" strokeWidth="1.400" /><path d="M4.500 11V5.500L8 9 11.500 5.500V11" fill="none" stroke="#fff" strokeWidth="1.600" /></Glyph>
          </ExtTile>
          <ExtTile $bg="linear-gradient(#8d8d8d,#b5b5b5)">
            <Glyph $w={13} $h={15} viewBox="0 0 13 15"><ellipse cx="6.500" cy="7.500" rx="6" ry="7" fill="#cfcfcf" /><path d="M9 1Q15 7 9 13 4 14 4 11 8 8 9 1z" fill="#fff" /></Glyph>
          </ExtTile>
          <ExtTile $bg="#20242b" $color="#5fd3f3"><FaReact size={18} /></ExtTile>
          <Glyph $w={20} $h={19} viewBox="0 0 20 19"><path d="M6 0H14L20 6V13L14 19H6L0 13V6z" fill="#df2323" /><path d="M5.300 7V12M7.600 4V10M9.900 3V10M12.200 4V10" stroke="#fff" strokeWidth="1.600" strokeLinecap="round" fill="none" /><path d="M4.500 9.500H13V11.500L14.500 9.300Q16 9 15.600 10L12.600 15Q11.500 16.500 9 16.500 4.500 16.500 4.500 12z" fill="#fff" /></Glyph>
          <ExtTile $bg="#c6c6c6">
            <Glyph $w={13} $h={14} viewBox="0 0 13 14" fill="none" stroke="#fff" strokeWidth="1.300"><path d="M1 13Q7 9 6.500 2 6 0 5 2 5.500 8 12 10 13 8.500 9 8.500 5 9 1 13z" /></Glyph>
          </ExtTile>
          <Glyph $w={20} $h={20} viewBox="0 0 20 20" fill="none" stroke="#cdcdcd" strokeWidth="1.300"><circle cx="10" cy="10.500" r="8.500" /><circle cx="10" cy="10.500" r="4.500" /><circle cx="10" cy="10.500" r="1.800" fill="#cdcdcd" /><circle cx="16.500" cy="4.500" r="1.500" fill="#cdcdcd" /></Glyph>
        </Extensions>
        <Glyph $gap={28} $w={4} $h={17} viewBox="0 0 4 17" fill="#555"><circle cx="2" cy="2" r="2" /><circle cx="2" cy="8.500" r="2" /><circle cx="2" cy="15" r="2" /></Glyph>
      </AddressRow>

      <Bookmarks>
        <Bookmark $gap={11}><AppsIcon /><Fit w={33}>Apps</Fit></Bookmark>
        <Bookmark $gap={13.5}><FileIcon /><Fit w={28}>Lulu</Fit></Bookmark>
        {folders.map(([name, w], i) => (
          <Bookmark key={i}><FolderIcon /><Fit w={w}>{name}</Fit></Bookmark>
        ))}
        <Bookmark><FileIcon /><Fit w={58}>JS_Editor</Fit></Bookmark>
        <Bookmark $gap={10}><PdfIcon /><Fit w={116}>Online PDF Editor</Fit></Bookmark>
        <Glyph $w={8} $h={7} viewBox="0 0 8 7" fill="none" stroke="#444" strokeWidth="1.500"><path d="M.5.5 3.500 3.500.5 6.500M4.500.5 7.500 3.500 4.500 6.500" /></Glyph>
      </Bookmarks>

      <PlayerArea>
        <Letterbox>
          <MacScreen>
            <MacMenu />
            <MacWindow>
              <TitleBar>
                <Light $c="#fb6d5c" /><Light $c="#fdbd3f" /><Light $c="#2eb34a" />
                <Fit w={585} gap={365}>003 - field setup - Redux - [/Users/stephengrider/Google Drive/Mocks/Redux.bmpr]</Fit>
              </TitleBar>
              <ProjectName><Fit w={48}>Redux</Fit></ProjectName>
              <BalsamiqTools />
              <Workspace>
                <MockCanvas />
                <VScroll><Arrow $dir="up" /><VThumb /><Arrow $dir="down" /></VScroll>
              </Workspace>
              <HScroll><Arrow $dir="left" /><HThumb /><Arrow $dir="right" /></HScroll>
            </MacWindow>
            <MacDock />
          </MacScreen>
        </Letterbox>
      </PlayerArea>

      <Taskbar />
      <Watermark>
        <MarkTitle><Fit w={195}>Activate Windows</Fit></MarkTitle>
        <MarkText><Fit w={306}>Go to PC settings to activate Windows.</Fit></MarkText>
      </Watermark>
    </Desktop>
  );
}
